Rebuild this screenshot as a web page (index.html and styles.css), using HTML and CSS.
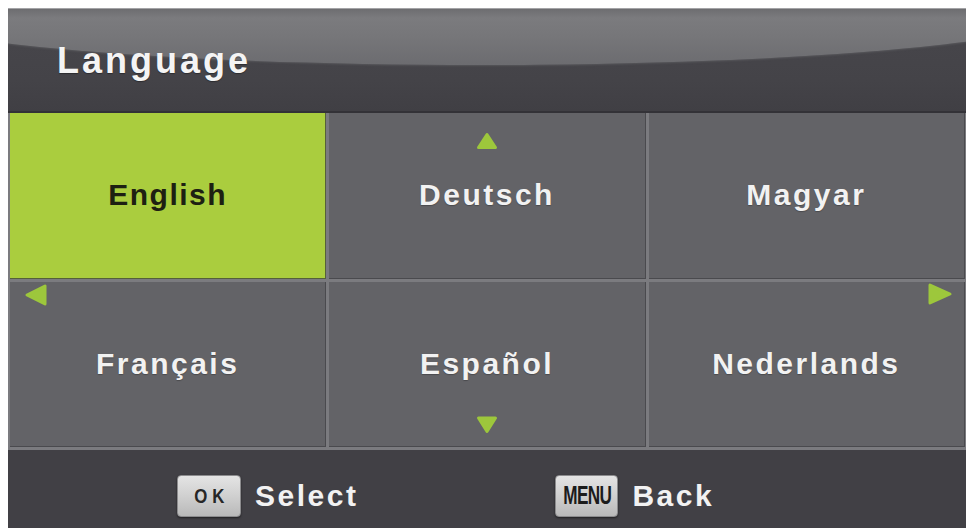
FILE: index.html
```html
<!DOCTYPE html>
<html lang="en">
<head>
<meta charset="utf-8">
<title>Language</title>
<link rel="stylesheet" href="styles.css">
</head>
<body>
<div class="panel">
  <header class="header">
    <h1 class="title">Language</h1>
  </header>
  <div class="grid">
    <div class="cell active"><span class="label">English</span></div>
    <div class="cell">
      <svg class="arrow arrow-up" width="22" height="18" viewBox="0 0 22 18"><polygon points="11,2.5 19.5,15.5 2.5,15.5"/></svg>
      <span class="label">Deutsch</span>
    </div>
    <div class="cell"><span class="label">Magyar</span></div>
    <div class="cell">
      <svg class="arrow arrow-left" width="24" height="24" viewBox="0 0 24 24"><polygon points="3,12 21,3 21,21"/></svg>
      <span class="label">Français</span>
    </div>
    <div class="cell">
      <span class="label">Español</span>
      <svg class="arrow arrow-down" width="22" height="19" viewBox="0 0 22 19"><polygon points="2.5,3 19.5,3 11,16.5"/></svg>
    </div>
    <div class="cell">
      <svg class="arrow arrow-right" width="26" height="24" viewBox="0 0 26 24"><polygon points="23,12 3,3 3,21"/></svg>
      <span class="label">Nederlands</span>
    </div>
  </div>
  <footer class="bar">
    <div class="hint">
      <span class="key key-ok"><span class="ok-text">OK</span></span>
      <span class="hint-text">Select</span>
    </div>
    <div class="hint">
      <span class="key key-menu"><span class="menu-text">MENU</span></span>
      <span class="hint-text">Back</span>
    </div>
  </footer>
</div>
</body>
</html>
```

FILE: styles.css
```css
html, body {
  margin: 0;
  padding: 0;
  background: #ffffff;
  overflow: hidden;
}

body {
  font-family: "Liberation Sans", Arial, sans-serif;
}

.panel {
  margin: 8px 0 0 8px;
  width: 958px;
  height: 520px;
  display: flex;
  flex-direction: column;
  background: #424146;
}

/* ---------- header ---------- */
.header {
  position: relative;
  overflow: hidden;
  height: 102px;
  flex: 0 0 auto;
  display: flex;
  align-items: center;
  padding-left: 49px;
  background: linear-gradient(to bottom, #48474c 0%, #444348 70%, #403f44 100%);
  border-top: 1px solid #a3a3a6;
  border-bottom: 2px solid #333237;
  box-sizing: content-box;
}

.header::before {
  content: "";
  position: absolute;
  left: -128px;
  top: -56px;
  width: 1200px;
  height: 112px;
  border-radius: 50%;
  background: linear-gradient(to bottom, #6a6a6d 48%, #7b7b7e 58%, #767679 75%, #6c6c70 100%);
  box-shadow: 0 1px 2px rgba(90, 90, 94, 0.8);
}

.title {
  position: relative;
  margin: 0;
  padding-top: 2px;
  font-size: 36px;
  font-weight: bold;
  letter-spacing: 3px;
  color: #f4f4f4;
  text-shadow: 0 1px 1px rgba(0, 0, 0, 0.35);
}

/* ---------- grid ---------- */
.grid {
  flex: 0 0 auto;
  height: 334px;
  display: grid;
  grid-template-columns: repeat(3, 1fr);
  grid-template-rows: repeat(2, 1fr);
  gap: 3px;
  padding: 0 1px 3px 2px;
  background: #7b7b7f;
}

.cell {
  position: relative;
  display: flex;
  align-items: center;
  justify-content: center;
  background: #636367;
  border-right: 1px solid #4a4a4e;
  border-bottom: 1px solid #4a4a4e;
}

.cell.active {
  background: #aacd3e;
  border-color: #55603a;
}

.label {
  font-size: 30px;
  font-weight: bold;
  letter-spacing: 2.5px;
  color: #f2f2f2;
  text-shadow: 0 1px 1px rgba(0, 0, 0, 0.25);
}

.active .label {
  color: #1d2012;
  letter-spacing: 1.5px;
  text-shadow: none;
}

.arrow {
  position: absolute;
}

.arrow polygon {
  fill: #9dc73c;
  stroke: #9dc73c;
  stroke-width: 3;
  stroke-linejoin: round;
}

.arrow-up {
  top: 19px;
  left: 50%;
  margin-left: -11px;
}

.arrow-down {
  bottom: 12px;
  left: 50%;
  margin-left: -11px;
}

.arrow-left {
  top: 1px;
  left: 14px;
}

.arrow-right {
  top: 0;
  right: 11px;
}

/* ---------- bottom bar ---------- */
.bar {
  flex: 1 1 auto;
  display: flex;
  align-items: center;
  gap: 197px;
  padding: 13px 0 0 169px;
  background: #414045;
}

.hint {
  display: flex;
  align-items: center;
  gap: 14px;
}

.key {
  display: flex;
  align-items: center;
  justify-content: center;
  box-sizing: border-box;
  height: 42px;
  border-radius: 4px;
  border: 1px solid #8c8c8e;
  background: linear-gradient(to bottom, #e4e4e4 0%, #d2d2d2 45%, #b9b9b9 100%);
  box-shadow: 0 1px 2px rgba(0, 0, 0, 0.5);
  color: #222222;
  font-weight: bold;
}

.key-ok {
  width: 64px;
}

.ok-text {
  display: inline-block;
  font-size: 21px;
  letter-spacing: 6px;
  margin-right: -6px;
  transform: scaleX(0.8);
  color: #262626;
}

.key-menu {
  width: 63px;
  overflow: hidden;
}

.menu-text {
  display: inline-block;
  font-size: 26px;
  letter-spacing: -1px;
  transform: scaleX(0.66);
  color: #1c1c1c;
}

.hint-text {
  font-size: 30px;
  font-weight: bold;
  letter-spacing: 2.5px;
  color: #f2f2f2;
}
```
